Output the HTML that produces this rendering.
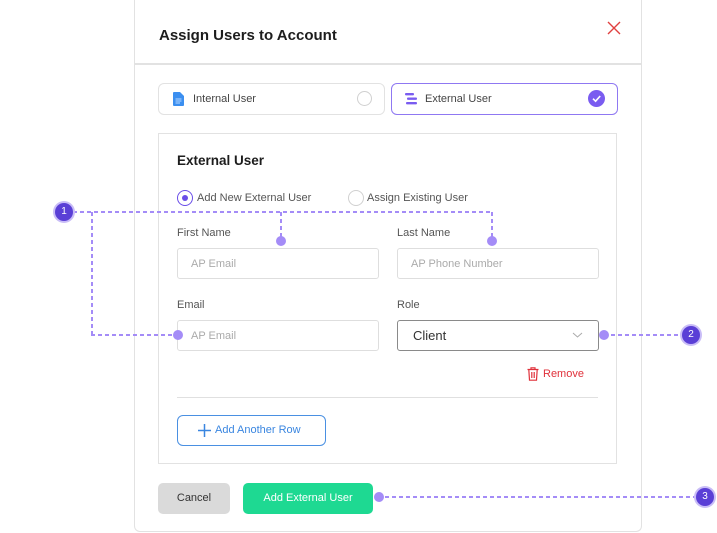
<!DOCTYPE html>
<html><head><meta charset="utf-8"><style>
*{box-sizing:border-box;margin:0;padding:0}
body{width:717px;height:533px;background:#fff;font-family:"Liberation Sans",sans-serif;position:relative;overflow:hidden;color:#222}
.a{position:absolute}
.modal{left:134px;top:0;width:508px;height:532px;border:1px solid #e2e2e2;border-top:none;border-radius:0 0 6px 6px;background:#fff}
.t{font-size:11px;color:#444}
.inp{border:1px solid #dedede;border-radius:3px;height:31px;width:202px;font-size:11px;color:#aaa;padding:9px 0 0 13px}
.lbl{font-size:11px;color:#555}
.h{height:2px;background:repeating-linear-gradient(90deg,#a48cf7 0 4px,transparent 4px 7px)}
.v{width:2px;background:repeating-linear-gradient(180deg,#a48cf7 0 4px,transparent 4px 7px)}
.dot{width:10px;height:10px;border-radius:50%;background:#a48cf7}
.num{width:18px;height:18px;border-radius:50%;background:#5a3fd6;color:#fff;font-size:10px;text-align:center;line-height:18px;box-shadow:0 0 0 2px #c9bdf7}
</style></head><body>
<div class="a modal"></div>
<div class="a" style="left:159px;top:27px;font-size:15px;font-weight:bold;color:#1d1d1d">Assign Users to Account</div>
<svg class="a" style="left:607px;top:21px" width="14" height="14"><path d="M1 1L13 13M13 1L1 13" stroke="#e0403f" stroke-width="1.4"/></svg>
<div class="a" style="left:134px;top:63px;width:508px;height:2px;background:#e2e2e2"></div>

<div class="a" style="left:158px;top:83px;width:227px;height:32px;border:1px solid #e2e2e2;border-radius:6px"></div>
<svg class="a" style="left:173px;top:92px" width="11" height="14"><path d="M0 1Q0 0 1 0H7L11 4V13Q11 14 10 14H1Q0 14 0 13Z" fill="#3b8ff0"/><path d="M2.5 7H8.5M2.5 9H8.5M2.5 11H7" stroke="#b9d8ff" stroke-width="0.9"/></svg>
<div class="a t" style="left:193px;top:93px">Internal User</div>
<div class="a" style="left:357px;top:91px;width:15px;height:15px;border:1.5px solid #d0d0d0;border-radius:50%"></div>

<div class="a" style="left:391px;top:83px;width:227px;height:32px;border:1px solid #8f78f2;border-radius:6px"></div>
<svg class="a" style="left:405px;top:93px" width="13" height="12"><rect x="0" y="0" width="9" height="2.4" rx="1" fill="#7a5cf0"/><rect x="2" y="4.5" width="10" height="2.4" rx="1" fill="#7a5cf0"/><rect x="1" y="9" width="11" height="2.4" rx="1" fill="#7a5cf0"/></svg>
<div class="a t" style="left:425px;top:93px">External User</div>
<svg class="a" style="left:588px;top:90px" width="17" height="17"><circle cx="8.5" cy="8.5" r="8.5" fill="#7a5cf0"/><path d="M5 8.7L7.6 11.2L12.2 6" stroke="#fff" stroke-width="1.6" fill="none"/></svg>

<div class="a" style="left:158px;top:133px;width:459px;height:331px;border:1px solid #e2e2e2"></div>
<div class="a" style="left:177px;top:153px;font-size:13.5px;font-weight:bold;color:#1d1d1d">External User</div>
<div class="a" style="left:177px;top:190px;width:16px;height:16px;border:1.5px solid #6a4ee8;border-radius:50%"></div>
<div class="a" style="left:182px;top:195px;width:6px;height:6px;background:#6a4ee8;border-radius:50%"></div>
<div class="a t" style="left:197px;top:192px;color:#555">Add New External User</div>
<div class="a" style="left:348px;top:190px;width:16px;height:16px;border:1.5px solid #d0d0d0;border-radius:50%"></div>
<div class="a t" style="left:367px;top:192px;color:#555">Assign Existing User</div>

<div class="a lbl" style="left:177px;top:227px">First Name</div>
<div class="a inp" style="left:177px;top:248px">AP Email</div>
<div class="a lbl" style="left:397px;top:227px">Last Name</div>
<div class="a inp" style="left:397px;top:248px">AP Phone Number</div>
<div class="a lbl" style="left:177px;top:299px">Email</div>
<div class="a inp" style="left:177px;top:320px">AP Email</div>
<div class="a lbl" style="left:397px;top:299px">Role</div>
<div class="a inp" style="left:397px;top:320px;border-color:#8a8a8a;color:#333;font-size:13px;padding-top:7px;padding-left:15px">Client</div>
<svg class="a" style="left:572px;top:332px" width="11" height="7"><path d="M1 1L5.5 5L10 1" stroke="#aaa" stroke-width="1" fill="none"/></svg>

<svg class="a" style="left:527px;top:367px" width="12" height="14"><path d="M0.5 2.5H11.5M4 2.5V0.8H8V2.5M1.8 2.5L2.5 13.2H9.5L10.2 2.5M4.8 5V11M7.2 5V11" stroke="#e0303a" stroke-width="1.2" fill="none"/></svg>
<div class="a" style="left:543px;top:368px;font-size:11px;color:#e0303a">Remove</div>
<div class="a" style="left:177px;top:397px;width:421px;height:1px;background:#e0e0e0"></div>

<div class="a" style="left:177px;top:415px;width:149px;height:31px;border:1px solid #4a90e2;border-radius:6px"></div>
<svg class="a" style="left:198px;top:424px" width="13" height="13"><path d="M6.5 0V13M0 6.5H13" stroke="#3a86e0" stroke-width="1.5"/></svg>
<div class="a" style="left:215px;top:424px;font-size:11px;color:#3a86e0">Add Another Row</div>

<div class="a" style="left:158px;top:483px;width:72px;height:31px;background:#dadada;border-radius:5px;font-size:11px;color:#333;text-align:center;line-height:31px">Cancel</div>
<div class="a" style="left:243px;top:483px;width:130px;height:31px;background:#1ed992;border-radius:5px;font-size:11px;color:#fff;text-align:center;line-height:31px">Add External User</div>

<div class="a h" style="left:73px;top:211px;width:419px"></div>
<div class="a v" style="left:280px;top:212px;height:28px"></div>
<div class="a dot" style="left:276px;top:236px"></div>
<div class="a v" style="left:491px;top:212px;height:28px"></div>
<div class="a dot" style="left:487px;top:236px"></div>
<div class="a v" style="left:91px;top:212px;height:123px"></div>
<div class="a h" style="left:91px;top:334px;width:86px"></div>
<div class="a dot" style="left:173px;top:330px"></div>
<div class="a num" style="left:55px;top:203px">1</div>
<div class="a h" style="left:604px;top:334px;width:80px"></div>
<div class="a dot" style="left:599px;top:330px"></div>
<div class="a num" style="left:682px;top:326px">2</div>
<div class="a h" style="left:378px;top:496px;width:320px"></div>
<div class="a dot" style="left:374px;top:492px"></div>
<div class="a num" style="left:696px;top:488px">3</div>
</body></html>
